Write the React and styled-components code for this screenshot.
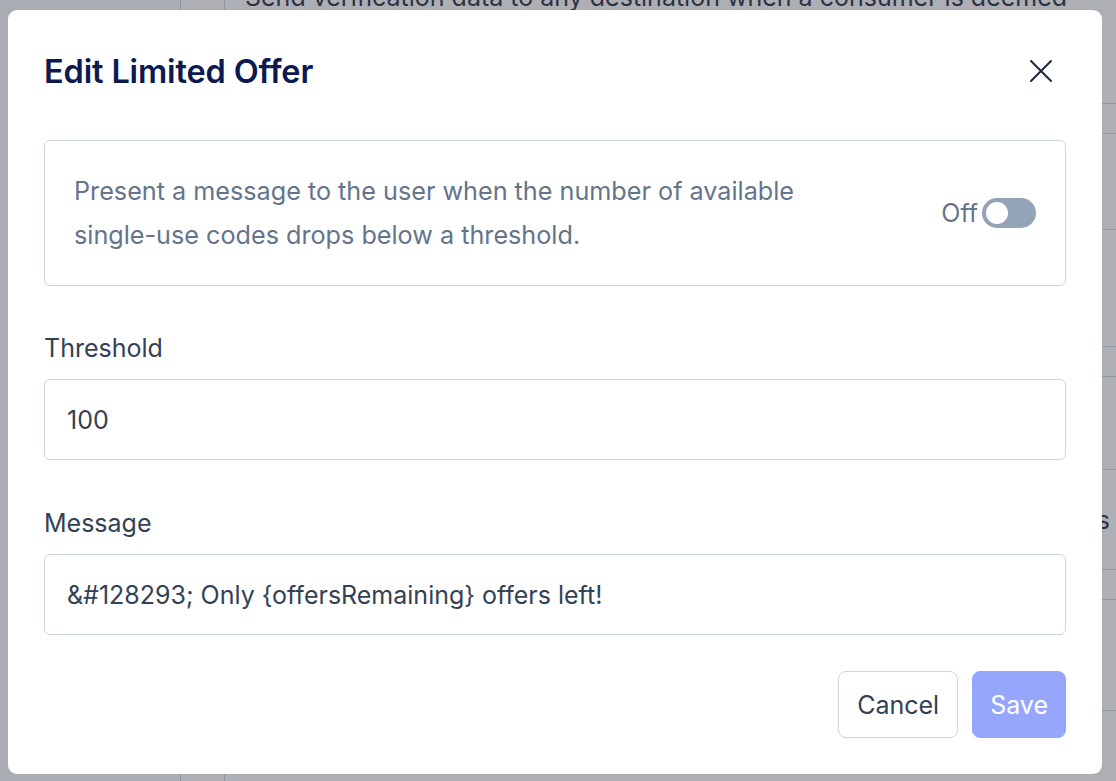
import React from "react";
import styled, { createGlobalStyle } from "styled-components";

const Global = createGlobalStyle`
  * { box-sizing: border-box; }
  html, body { margin: 0; padding: 0; }
  body {
    width: 1116px;
    height: 781px;
    overflow: hidden;
    font-family: Inter, "Noto Sans", "Liberation Sans", sans-serif;
    background: #ffffff;
  }
`;

/* ---------- page behind the dialog ---------- */
const Page = styled.div`
  display: flex;
  width: 1116px;
  height: 781px;
  background: #ffffff;
`;

const Sidebar = styled.aside`
  width: 181px;
  flex-shrink: 0;
  border-right: 1px solid #cbd5e1;
  background: #f8fafc;
`;

const Rail = styled.div`
  width: 44px;
  flex-shrink: 0;
  border-right: 1px solid #cbd5e1;
`;

const Main = styled.main`
  flex: 1;
  display: flex;
  flex-direction: column;
  padding-left: 20px;
`;

const Lead = styled.p`
  margin: -19px 0 0;
  font-size: 25px;
  line-height: 32px;
  color: #1e293b;
  white-space: nowrap;
`;

const Row = styled.div`
  height: ${(p) => p.$h}px;
  border-bottom: 1px solid #cbd5e1;
  display: flex;
  align-items: center;
  justify-content: flex-end;
  font-size: 25px;
  color: #1e293b;
  padding-right: 6px;
`;

const Overlay = styled.div`
  position: fixed;
  inset: 0;
  background: rgba(60, 64, 78, 0.42);
`;

/* ---------- dialog ---------- */
const Dialog = styled.div`
  position: fixed;
  left: 8px;
  top: 10px;
  width: 1094px;
  height: 764px;
  background: #ffffff;
  border-radius: 9px;
  padding: 0 36px 36px;
  display: flex;
  flex-direction: column;
`;

const Header = styled.header`
  height: 122px;
  margin-bottom: 8px;
  display: flex;
  align-items: center;
  justify-content: space-between;
`;

const Title = styled.h2`
  margin: 0;
  font-size: 32.5px;
  font-weight: 600;
  color: #0c1a4f;
  letter-spacing: -0.15px;
`;

const CloseButton = styled.button`
  width: 36px;
  height: 36px;
  margin-right: 7px;
  border: none;
  background: transparent;
  padding: 0;
  display: flex;
  align-items: center;
  justify-content: center;
  color: #1e293b;
  cursor: pointer;
`;

const InfoBox = styled.section`
  height: 146px;
  border: 1px solid #cbd5e1;
  border-radius: 6px;
  padding: 0 29px;
  display: flex;
  align-items: center;
  justify-content: space-between;
`;

const InfoText = styled.p`
  margin: 0;
  max-width: 780px;
  font-size: 25.2px;
  line-height: 44px;
  color: #64748b;
`;

const ToggleWrap = styled.label`
  display: flex;
  align-items: center;
  gap: 4px;
  font-size: 25px;
  color: #64748b;
`;

const Switch = styled.span`
  width: 54px;
  height: 30px;
  border-radius: 15px;
  background: #94a3b8;
  padding: 4px;
  display: flex;
  align-items: center;
  justify-content: ${(p) => (p.$on ? "flex-end" : "flex-start")};
`;

const Knob = styled.span`
  width: 22px;
  height: 22px;
  border-radius: 50%;
  background: #ffffff;
`;

const Field = styled.div`
  margin-top: ${(p) => p.$gap || 47}px;
  display: flex;
  flex-direction: column;
  gap: 16px;
`;

const Label = styled.label`
  font-size: 25px;
  line-height: 30px;
  color: #334155;
`;

const Input = styled.input`
  height: 81px;
  width: 100%;
  border: 1px solid #cbd5e1;
  border-radius: 6px;
  padding: 0 22px;
  font-family: inherit;
  font-size: 25px;
  color: #334155;
  background: #ffffff;
  outline: none;
`;

const Footer = styled.footer`
  margin-top: 36px;
  display: flex;
  justify-content: flex-end;
  gap: 14px;
`;

const Button = styled.button`
  height: 67px;
  padding: 0 ${(p) => (p.$primary ? 17 : 18)}px;
  border-radius: 8px;
  font-family: inherit;
  font-size: 25px;
  border: 1px solid ${(p) => (p.$primary ? "#97a6fd" : "#cbd5e1")};
  background: ${(p) => (p.$primary ? "#97a6fd" : "#ffffff")};
  color: ${(p) => (p.$primary ? "#ffffff" : "#334155")};
  cursor: pointer;
`;

const rows = [104, 30, 96, 117, 30, 93, 100, 30, 111];
const messageValue = "&#128293; Only {offersRemaining} offers left!";

export default function App() {
  return (
    <>
      <Global />
      <Page>
        <Sidebar />
        <Rail />
        <Main>
          <Lead>Send verification data to any destination when a consumer is deemed</Lead>
          {rows.map((h, i) => (
            <Row key={i} $h={i === 0 ? h - 13 : h}>
              {i === 6 ? "Webhooks" : null}
            </Row>
          ))}
        </Main>
      </Page>
      <Overlay />
      <Dialog role="dialog" aria-labelledby="dlg-title">
        <Header>
          <Title id="dlg-title">Edit Limited Offer</Title>
          <CloseButton aria-label="Close">
            <svg width="24" height="24" viewBox="0 0 24 24" fill="none" stroke="currentColor" strokeWidth="2" strokeLinecap="round">
              <path d="M2 2 L22 22 M22 2 L2 22" />
            </svg>
          </CloseButton>
        </Header>
        <InfoBox>
          <InfoText>
            Present a message to the user when the number of available single-use codes drops below a threshold.
          </InfoText>
          <ToggleWrap>
            Off
            <Switch $on={false}>
              <Knob />
            </Switch>
          </ToggleWrap>
        </InfoBox>
        <Field>
          <Label htmlFor="threshold">Threshold</Label>
          <Input id="threshold" defaultValue="100" />
        </Field>
        <Field $gap={48}>
          <Label htmlFor="message">Message</Label>
          <Input id="message" defaultValue={messageValue} />
        </Field>
        <Footer>
          <Button>Cancel</Button>
          <Button $primary>Save</Button>
        </Footer>
      </Dialog>
    </>
  );
}
